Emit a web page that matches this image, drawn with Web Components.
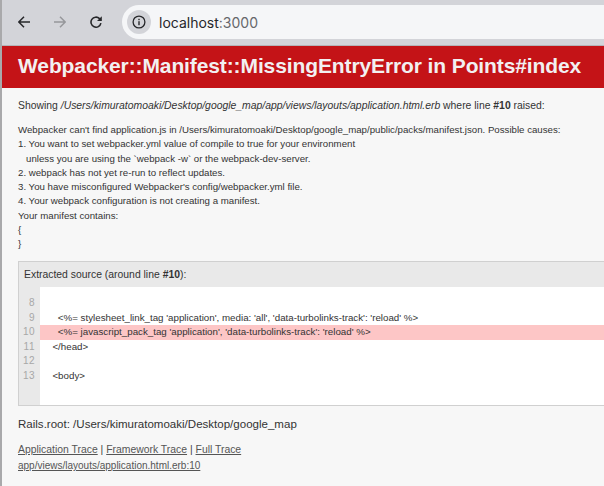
<!DOCTYPE html>
<html>
<head>
<meta charset="utf-8">
<style>
  html, body { margin: 0; padding: 0; height: 100%; overflow: hidden; }
  body { font-family: "Liberation Sans", Arial, sans-serif; background: #f7f7f7; color: #333; }
</style>
</head>
<body>
<browser-window>
  <browser-bar url="localhost" port=":3000"></browser-bar>
  <error-header>Webpacker::Manifest::MissingEntryError in Points#index</error-header>
  <error-body>
    <p class="showing" slot="showing">Showing <i>/Users/kimuratomoaki/Desktop/google_map/app/views/layouts/application.html.erb</i> where line <b>#10</b> raised:</p>
    <div slot="message">Webpacker can't find application.js in /Users/kimuratomoaki/Desktop/google_map/public/packs/manifest.json. Possible causes:
1. You want to set webpacker.yml value of compile to true for your environment
   unless you are using the `webpack -w` or the webpack-dev-server.
2. webpack has not yet re-run to reflect updates.
3. You have misconfigured Webpacker's config/webpacker.yml file.
4. Your webpack configuration is not creating a manifest.
Your manifest contains:
{
}</div>
    <source-extract slot="source" highlight="10"></source-extract>
    <trace-links slot="trace"></trace-links>
  </error-body>
</browser-window>
<script>
class BrowserWindow extends HTMLElement {
  constructor() {
    super();
    this.attachShadow({mode: 'open'}).innerHTML = `
      <style>
        :host { display: block; height: 486px; box-sizing: border-box; border-left: 2px solid #a9a9ab; overflow: hidden; }
      </style>
      <slot></slot>`;
  }
}
customElements.define('browser-window', BrowserWindow);

class BrowserBar extends HTMLElement {
  constructor() {
    super();
    const url = this.getAttribute('url');
    const port = this.getAttribute('port');
    this.attachShadow({mode: 'open'}).innerHTML = `
      <style>
        :host { display: flex; align-items: flex-start; height: 46px; box-sizing: border-box; background: #d3d4d9; border-bottom: 1px solid #b4b4b8; padding: 5px 0 0 16px; }
        svg { display: block; flex: none; }
        .nav { width: 12px; height: 12px; margin-top: 11px; }
        .fwd, .reload { margin-left: 24px; }
        .pill { flex: 1; display: flex; align-items: center; height: 34px; margin-left: 20px; background: #f5f6f8; border-radius: 17px 0 0 17px; padding-left: 5px; font: 14px "Inter", "Liberation Sans", sans-serif; color: #26272a; }
        .info { width: 24px; height: 24px; border-radius: 50%; background: #d3d4d9; display: flex; align-items: center; justify-content: center; margin-right: 8px; }
        .port { color: #66676b; }
      </style>
      <svg class="nav" viewBox="0 0 12 12" fill="none" stroke="#26272a" stroke-width="1.5"><path d="M12 6H1M6 .8 .8 6 6 11.2"/></svg>
      <svg class="nav fwd" viewBox="0 0 12 12" fill="none" stroke="#96979b" stroke-width="1.5"><path d="M0 6H11M6 .8 11.2 6 6 11.2"/></svg>
      <svg class="nav reload" viewBox="0 0 12 12" fill="none" stroke="#26272a" stroke-width="1.6"><path d="M10.9 7.2A5 5 0 1 1 9.5 2.6L10.8 3.9"/><path d="M11.8 .2V5H7z" fill="#26272a" stroke="none"/></svg>
      <div class="pill">
        <div class="info">
          <svg width="14" height="14" viewBox="0 0 14 14" fill="none"><circle cx="7" cy="7" r="5.9" stroke="#26272a" stroke-width="1.3"/><rect x="6.3" y="6.2" width="1.4" height="4" fill="#26272a"/><rect x="6.3" y="3.8" width="1.4" height="1.4" fill="#26272a"/></svg>
        </div>
        <span>${url}<span class="port">${port}</span></span>
      </div>`;
  }
}
customElements.define('browser-bar', BrowserBar);

class ErrorHeader extends HTMLElement {
  constructor() {
    super();
    this.attachShadow({mode: 'open'}).innerHTML = `
      <style>
        :host { display: block; background: #c41317; color: #f2f0f1; height: 42px; box-sizing: border-box; padding: 6px 0 0 16px; font: bold 21px/27px "Liberation Sans", Arial, sans-serif; letter-spacing: -0.11px; white-space: nowrap; }
      </style>
      <slot></slot>`;
  }
}
customElements.define('error-header', ErrorHeader);

class ErrorBody extends HTMLElement {
  constructor() {
    super();
    this.attachShadow({mode: 'open'}).innerHTML = `
      <style>
        :host { display: block; padding: 11px 0 0 16px; color: #333; }
        .showing { font-size: 10.4px; line-height: 14px; height: 14px; white-space: nowrap; }
        .message { margin-top: 10px; font-size: 9.68px; line-height: 14.25px; white-space: pre; }
        ::slotted(p) { margin: 0; }
      </style>
      <div class="showing"><slot name="showing"></slot></div>
      <div class="message"><slot name="message"></slot></div>
      <slot name="source"></slot>
      <slot name="trace"></slot>`;
  }
}
customElements.define('error-body', ErrorBody);

class SourceExtract extends HTMLElement {
  constructor() {
    super();
    const rows = [
      ['8', ''],
      ['9', "    <%= stylesheet_link_tag 'application', media: 'all', 'data-turbolinks-track': 'reload' %>"],
      ['10', "    <%= javascript_pack_tag 'application', 'data-turbolinks-track': 'reload' %>"],
      ['11', '  </head>'],
      ['12', ''],
      ['13', '  <body>']
    ];
    const hl = this.getAttribute('highlight');
    const esc = s => s.replace(/&/g, '&amp;').replace(/</g, '&lt;');
    this.attachShadow({mode: 'open'}).innerHTML = `
      <style>
        :host { display: block; margin-top: 10px; border: 1px solid #d0d0d0; border-right: 0; background: #e9e9e9; font-size: 9.75px; color: #333; height: 145px; box-sizing: border-box; }
        .title { height: 25px; padding: 0 0 0 5px; font-size: 10.4px; line-height: 25px; white-space: nowrap; }
        .code { display: grid; grid-template-columns: 21px 1fr; height: 118px; }
        .lines { padding-top: 9px; text-align: right; color: #a7a7a7; line-height: 14.5px; font-size: 10px; letter-spacing: 0.5px; }
        .lines div { height: 14.5px; padding-right: 5px; }
        .src { background: #fff; padding-top: 9px; line-height: 14.5px; }
        .src div { height: 14.5px; white-space: pre; padding-left: 7px; }
        .src .hl { background: #fdc6c6; }
      </style>
      <div class="title">Extracted source (around line <b>#10</b>):</div>
      <div class="code">
        <div class="lines">${rows.map(r => `<div>${r[0]}</div>`).join('')}</div>
        <div class="src">${rows.map(r => `<div class="${r[0] === hl ? 'hl' : ''}">${esc(r[1])}</div>`).join('')}</div>
      </div>`;
  }
}
customElements.define('source-extract', SourceExtract);

class TraceLinks extends HTMLElement {
  constructor() {
    super();
    this.attachShadow({mode: 'open'}).innerHTML = `
      <style>
        :host { display: block; color: #444; }
        a { color: #555; text-decoration: underline; }
        .root { margin-top: 11px; font-size: 11.54px; line-height: 14px; color: #333; }
        .links { margin-top: 12px; font-size: 10.4px; line-height: 14px; }
        .file { font-size: 10px; line-height: 13px; margin-top: 2px; }
      </style>
      <div class="root">Rails.root: /Users/kimuratomoaki/Desktop/google_map</div>
      <div class="links"><a href="#">Application Trace</a> | <a href="#">Framework Trace</a> | <a href="#">Full Trace</a></div>
      <div class="file"><a href="#">app/views/layouts/application.html.erb:10</a></div>`;
  }
}
customElements.define('trace-links', TraceLinks);
</script>
</body>
</html>
